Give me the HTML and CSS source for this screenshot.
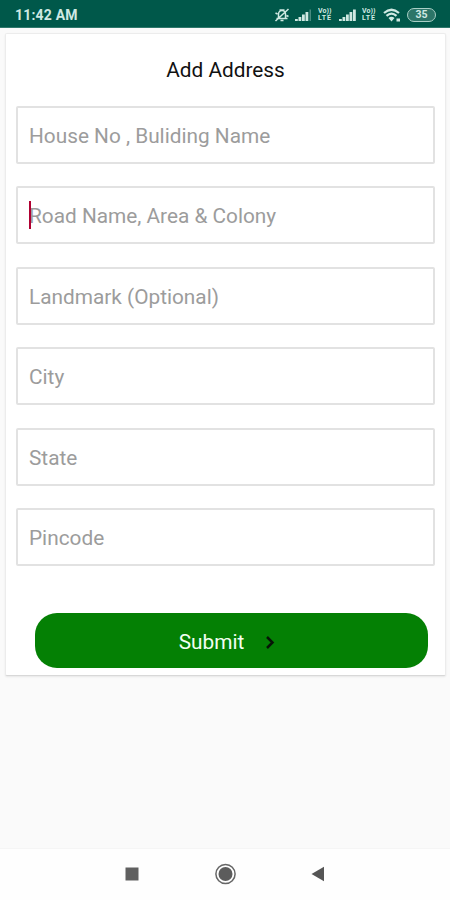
FILE: index.html
```
<!DOCTYPE html>
<html lang="en">
<head>
<meta charset="utf-8">
<title>Add Address</title>
<link rel="stylesheet" href="styles.css">
</head>
<body>
<div class="screen">
  <header class="status">
    <span class="time">11:42 AM</span>
    <div class="indicators">
      <svg class="bell" width="16" height="16" viewBox="0 0 16 16" fill="none" stroke="currentColor" stroke-width="1.500"><path d="M2.500 11.500h11M4.500 11V7a3.500 3.500 0 0 1 7 0v4M6.500 13.500h3M5.500 3h5M1.500 14 14.500 2M1.500 6l2 1M12.500 8.500l2 1"/></svg>
      <svg class="signal" width="17" height="14" viewBox="0 0 17 14" fill="currentColor"><path d="M0 11h2.800v2H0zM3.500 9h2.800v4H3.500zM7 6.500h2.800V13H7zM10.500 4h2.800v9h-2.800z"/><path opacity=".35" d="M14.500 1.500h1.500V13h-1.500z"/></svg>
      <span class="volte"><span>Vo))</span><span class="lte">LTE</span></span>
      <svg class="signal" width="17" height="14" viewBox="0 0 17 14" fill="currentColor"><path d="M0 11h2.800v2H0zM3.500 9h2.800v4H3.500zM7 6.500h2.800V13H7zM10.500 4h2.800v9h-2.800zM14 1.500h2.800V13H14z"/></svg>
      <span class="volte"><span>Vo))</span><span class="lte">LTE</span></span>
      <svg class="wifi" width="18" height="14" viewBox="0 0 18 14" fill="none" stroke="currentColor" stroke-width="2.200"><path d="M1 5q7.500-6.500 15 0M3.500 7.900q5-4.500 10 0"/><path fill="currentColor" stroke="none" d="M5.500 10q3-2.500 6 0l-3 3.500zM13.500 10.500H17v3h-3.500z"/></svg>
      <span class="battery">35</span>
    </div>
  </header>
  <main class="card">
    <h1>Add Address</h1>
    <form class="fields">
      <div class="field"><span>House No , Buliding Name</span></div>
      <div class="field focused"><span>Road Name, Area &amp; Colony</span></div>
      <div class="field"><span>Landmark (Optional)</span></div>
      <div class="field"><span>City</span></div>
      <div class="field"><span>State</span></div>
      <div class="field"><span>Pincode</span></div>
      <button class="submit" type="button"><span>Submit</span><svg width="10" height="14" viewBox="0 0 10 14" fill="none" stroke="#071507" stroke-width="2.500"><path d="m2 2 5.500 5.500L2 13"/></svg></button>
    </form>
  </main>
  <nav class="navbar">
    <svg width="14" height="14" viewBox="0 0 14 14"><path fill="#606060" d="M.5.500h13v13H.5z"/></svg>
    <svg width="22" height="22" viewBox="0 0 22 22"><circle cx="11.500" cy="11" r="9.600" fill="none" stroke="#666" stroke-width="1.500"/><circle cx="11.500" cy="11" r="7" fill="#5c5c5c"/></svg>
    <svg width="14" height="16" viewBox="0 0 14 16"><path fill="#555" d="M.5 8 13 .700v14.600z"/></svg>
  </nav>
</div>
</body>
</html>
```
FILE: styles.css
```
* { box-sizing: border-box; }
body { margin: 0; font-family: Roboto, "Liberation Sans", sans-serif; }
.screen { width: 450px; height: 900px; display: flex; flex-direction: column; background: #fafafa; }
.status { height: 28px; padding: 2px 14px 0 15px; display: flex; align-items: center; justify-content: space-between; background: #00584a; border-bottom: 1px solid #2f786c; color: #cfe9e2; }
.time { font-size: 14px; font-weight: 700; letter-spacing: 0.2px; }
.indicators { display: flex; align-items: center; }
.bell { margin-right: 5px; }
.volte { width: 16px; margin: 0 5px 0 6px; display: flex; flex-direction: column; height: 14px; font-size: 7px; line-height: 7px; font-weight: 700; letter-spacing: 0.1px; }
.volte span { height: 7px; overflow: hidden; }
.volte .lte { letter-spacing: 0.8px; }
.wifi { margin-right: 6px; }
.battery { width: 29px; height: 14px; border: 1.5px solid #a9cfc6; border-radius: 7px; background: #2c7568; font-size: 10.5px; line-height: 12px; font-weight: 700; text-align: center; }
.card { height: 643px; margin: 5px 4px 0 5px; background: #fff; border: 1px solid #ececec; border-bottom-color: #d8d8d8; border-radius: 2px; box-shadow: 0 1px 2px #00000014; }
h1 { margin: 0; padding-top: 22px; height: 72px; text-align: center; font-size: 20.8px; line-height: 28px; font-weight: 400; color: #111; }
.fields { display: flex; flex-direction: column; gap: 22.4px; padding: 0 10px; }
.field { height: 58px; border: 2px solid #e2e2e2; border-radius: 2px; display: flex; align-items: center; padding: 2px 0 0 11px; font-size: 20.8px; color: #9c9c9c; }
.focused { position: relative; }
.focused::before { content: ""; position: absolute; left: 11px; top: 13px; width: 2px; height: 28px; background: #b00032; }
.submit { width: 393px; height: 55px; margin: 25px 0 0 19px; padding: 2px 9px 0 0; border: 0; border-radius: 22px; background: #048004; color: #f2fff2; font: 20.8px Roboto, sans-serif; display: flex; align-items: center; justify-content: center; gap: 21px; }
.navbar { height: 52px; margin-top: auto; padding: 0 125px 2px; display: flex; align-items: center; justify-content: space-between; background: #fefefe; border-top: 1px solid #f5f5f5; }
```
